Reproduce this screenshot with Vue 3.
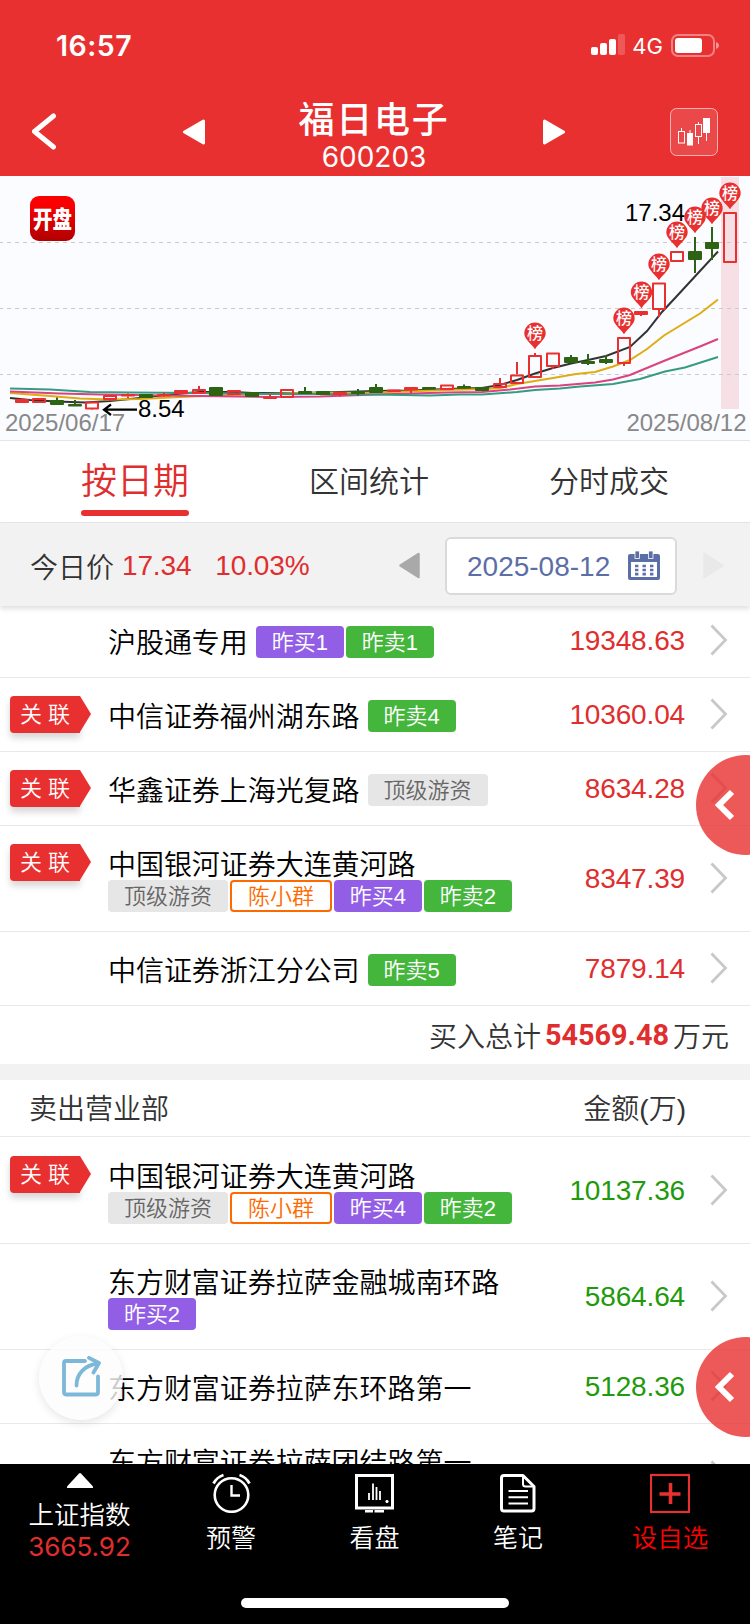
<template>
  <div class="page">
    <header class="header">
      <div class="status-bar">
        <span class="clock">16:57</span>
        <div class="status-right">
          <svg class="signal" width="34" height="22" viewBox="0 0 34 22">
            <rect x="0" y="13" width="7" height="8" rx="2" fill="#fff" />
            <rect x="9" y="9" width="7" height="12" rx="2" fill="#fff" />
            <rect x="18" y="5" width="7" height="16" rx="2" fill="#fff" />
            <rect x="27" y="0" width="7" height="21" rx="2" fill="#fff" opacity="0.2" />
          </svg>
          <span class="network">4G</span>
          <svg width="49" height="23" viewBox="0 0 49 23">
            <rect x="1" y="1" width="42" height="21" rx="6" fill="none" stroke="#fff" stroke-width="2" opacity="0.4" />
            <rect x="4" y="4" width="27" height="15" rx="3" fill="#fff" />
            <path d="M45 8 C49 9.500 49 13.500 45 15 Z" fill="#fff" opacity="0.5" />
          </svg>
        </div>
      </div>
      <div class="nav">
        <svg class="back" width="26" height="38" viewBox="0 0 26 38">
          <path d="M21.500 3 L2.500 18.500 L21.500 34" fill="none" stroke="#fff" stroke-width="5" stroke-linecap="round" stroke-linejoin="round" />
        </svg>
        <svg width="22" height="26" viewBox="0 0 22 26">
          <path d="M20.500 2 L1.500 13 L20.500 24 Z" fill="#fff" stroke="#fff" stroke-width="3" stroke-linejoin="round" />
        </svg>
        <div class="title">
          <h1>福日电子</h1>
          <p>600203</p>
        </div>
        <svg width="22" height="26" viewBox="0 0 22 26">
          <path d="M1.500 2 L20.500 13 L1.500 24 Z" fill="#fff" stroke="#fff" stroke-width="3" stroke-linejoin="round" />
        </svg>
        <span></span>
        <svg width="48" height="48" viewBox="0 0 48 48">
          <rect x="0.5" y="0.5" width="47" height="47" rx="6" fill="#fff" fill-opacity="0.12" stroke="#fff" stroke-opacity="0.6" />
          <path d="M11.500 20 V23.500 M28.500 14 V17 M28.500 28.500 V36 M20 22 V26 M36.500 24 V33" stroke="#fff" />
          <rect x="8.500" y="23.500" width="6" height="11.500" fill="none" stroke="#fff" />
          <rect x="17" y="25" width="6" height="12.500" fill="#fff" />
          <rect x="25.500" y="16.500" width="6" height="12" fill="none" stroke="#fff" />
          <rect x="33" y="10" width="7" height="15" fill="#fff" />
        </svg>
      </div>
    </header>

    <svg class="chart" width="750" height="264" viewBox="0 0 750 264">
      <defs>
        <linearGradient id="logoBg" x1="0" y1="0" x2="0" y2="1">
          <stop offset="0.2" stop-color="#fb0000" />
          <stop offset="1" stop-color="#b00000" />
        </linearGradient>
      </defs>
      <rect x="721" y="1" width="18" height="232" fill="#f6dfe5" />
      <line v-for="y in gridLines" :key="y" x1="-1" x2="750" :y1="y" :y2="y" class="grid-line" />
      <rect x="30" y="20" width="45" height="45" rx="9" fill="url(#logoBg)" />
      <text x="33" y="0" class="logo-text" transform="translate(0 51.500) scale(1 1.250)">开盘</text>

      <polyline v-for="l in lines" :key="l.color" :points="l.points" :stroke="l.color" class="ma" />
      <g v-for="(c, i) in candles" :key="i" :stroke="colors[c[5]]">
        <line :x1="c[0]" :x2="c[0]" :y1="c[3]" :y2="c[1]" stroke-width="2" />
        <line :x1="c[0]" :x2="c[0]" :y1="c[2]" :y2="c[4]" stroke-width="2" />
        <rect
          :x="c[0] - 6"
          :y="c[1] + 1"
          width="12"
          :height="Math.max(c[2] - c[1] - 2, 0.5)"
          :fill="c[5] === 'up' ? 'none' : colors[c[5]]"
          stroke-width="2"
          stroke-linejoin="round"
        />
      </g>

      <text x="5" y="255" class="axis">2025/06/17</text>
      <text x="746.500" y="255" class="axis" text-anchor="end">2025/08/12</text>
      <path d="M137 233.700 H104 M111 228.500 L104 233.700 L111 239" fill="none" stroke="#000" stroke-width="2.200" />
      <text x="138" y="241" class="price">8.54</text>
      <text x="625" y="45" class="price">17.34</text>

      <g v-for="p in pins" :key="p[0]">
        <path :d="pinPath(p[0], p[1])" fill="#e93030" />
        <text :x="p[0]" :y="p[1] + 6" class="pin-text">榜</text>
      </g>
    </svg>

    <nav class="tabs">
      <span class="tab active">按日期</span>
      <span class="tab">区间统计</span>
      <span class="tab">分时成交</span>
    </nav>

    <div class="filter">
      <span class="today">今日价</span>
      <span class="today-price">17.34</span>
      <span class="today-rate">10.03%</span>
      <svg class="prev" width="21" height="27" viewBox="0 0 21 27">
        <path d="M19.500 2 L1.500 13.500 L19.500 25 Z" fill="#a9a9a9" stroke="#a9a9a9" stroke-width="2.500" stroke-linejoin="round" />
      </svg>
      <div class="date-box">
        <span>2025-08-12</span>
        <svg class="calendar" width="32" height="29" viewBox="0 0 32 29">
          <path d="M2 3 H30 Q32 3 32 5 V27 Q32 29 30 29 H2 Q0 29 0 27 V5 Q0 3 2 3 Z M3 11 V26 H29 V11 Z" fill="#5c6ea6" fill-rule="evenodd" />
          <rect x="7" y="0" width="4.500" height="7.500" fill="#5c6ea6" stroke="#fff" stroke-width="0.800" />
          <rect x="20.500" y="0" width="4.500" height="7.500" fill="#5c6ea6" stroke="#fff" stroke-width="0.800" />
          <path d="M7 15 H25.500 M7 19 H25.500 M7 23.200 H25.500" stroke="#5c6ea6" stroke-width="2.700" stroke-dasharray="3.400 4.100" />
        </svg>
      </div>
      <svg class="next" width="21" height="27" viewBox="0 0 21 27">
        <path d="M1.500 2 L19.500 13.500 L1.500 25 Z" fill="#e9e9e9" stroke="#e9e9e9" stroke-width="2.500" stroke-linejoin="round" />
      </svg>
    </div>

    <main class="content">
      <template v-for="section in sections" :key="section.type">
        <div v-if="section.type === 'sell'" class="section-head">
          <span>卖出营业部</span>
          <span>金额(万)</span>
        </div>
        <ul class="list" :class="section.type">
          <li v-for="(row, i) in section.rows" :key="i" class="row">
            <div class="link-col">
              <div v-if="row.linked" class="linked"><span>关</span><span>联</span></div>
            </div>
            <div class="broker" :class="{ stacked: row.stacked }">
              <div class="name">{{ row.name }}</div>
              <div v-if="row.tags.length" class="tags">
                <span v-for="t in row.tags" :key="t" class="tag" :class="tagClass(t)">{{ t }}</span>
              </div>
            </div>
            <div class="amount">{{ row.amount }}</div>
            <svg class="chevron" width="18" height="32" viewBox="0 0 18 32">
              <path d="M1.500 1.500 L15.500 16 L1.500 30.500" fill="none" stroke="#c8c8c8" stroke-width="2.800" />
            </svg>
          </li>
        </ul>
        <div v-if="section.type === 'buy'" class="total">
          <span>买入总计</span><b>54569.48</b><span>万元</span>
        </div>
      </template>
    </main>

    <div v-for="n in 2" :key="n" class="drawer" :class="'drawer-' + n">
      <svg width="20" height="32" viewBox="0 0 20 32">
        <path d="M17 3 L4 16 L17 29" fill="none" stroke="#fff" stroke-width="6" />
      </svg>
    </div>

    <div class="share">
      <svg width="42" height="42" viewBox="0 0 42 42">
        <path d="M25 5 H6 Q4 5 4 7 V36 Q4 38.500 6 38.500 H36 Q38 38.500 38 36 V20.500" fill="none" stroke="#7db8d8" stroke-width="3.800" stroke-linecap="round" stroke-linejoin="round" />
        <path d="M16.500 29.500 C16.500 17.500 25 9 38 7.500" fill="none" stroke="#7db8d8" stroke-width="3.800" stroke-linecap="round" />
        <path d="M29 1.900 L39 7 L33.500 16.500" fill="none" stroke="#7db8d8" stroke-width="3.800" stroke-linecap="round" stroke-linejoin="round" />
      </svg>
    </div>

    <footer class="footer">
      <div class="foot-items">
        <div class="index">
          <svg width="26" height="15" viewBox="0 0 26 15">
            <path d="M12 0.500 Q13 -0.300 14 0.500 L26 13.500 V15 H0 V13.500 Z" fill="#fff" />
          </svg>
          <span class="index-name">上证指数</span>
          <span class="index-value">3665.92</span>
        </div>
        <div class="foot-item">
          <svg width="40" height="40" viewBox="0 0 40 40" fill="none" stroke="#fff">
            <circle cx="20.500" cy="22" r="16.800" stroke-width="2.600" />
            <path d="M20.500 12 V22.500 H29" stroke-width="2.400" />
            <path d="M2.500 10.500 Q6 4 12.500 2 M38.500 10.500 Q35 4 28.500 2" stroke-width="2.800" />
          </svg>
          <span>预警</span>
        </div>
        <div class="foot-item">
          <svg width="40" height="40" viewBox="0 0 40 40" fill="none" stroke="#fff">
            <rect x="2.500" y="2.500" width="36" height="32.500" stroke-width="3" />
            <path d="M11 38.300 H19 M20.500 38.300 H30" stroke-width="2.400" />
            <path d="M15 20 V27 M19 10.500 V27 M22.500 14 V27 M26 18 V27" stroke-width="1.800" />
            <circle cx="33" cy="28.500" r="1.200" fill="#fff" />
          </svg>
          <span>看盘</span>
        </div>
        <div class="foot-item">
          <svg width="40" height="40" viewBox="0 0 40 40" fill="none" stroke="#fff" stroke-linejoin="round">
            <path d="M6 2.500 H25 L36 13.500 V35.500 Q36 38 33.500 38 H6 Q3.500 38 3.500 35.500 V5 Q3.500 2.500 6 2.500 Z" stroke-width="3" />
            <path d="M25 3 V11 Q25 13.500 27.500 13.500 H36" stroke-width="2" />
            <path d="M10.500 18 H30 M10.500 24.300 H30 M10.500 30.500 H30" stroke-width="2" />
          </svg>
          <span>笔记</span>
        </div>
        <div class="foot-item fav">
          <svg width="40" height="40" viewBox="0 0 40 40" fill="none" stroke="#e93030">
            <rect x="1" y="2" width="38" height="37" stroke-width="2.200" />
            <path d="M20.500 10 V31 M9.500 21 H30.500" stroke-width="3.600" />
          </svg>
          <span>设自选</span>
        </div>
      </div>
      <div class="home-bar"></div>
    </footer>
  </div>
</template>

<script setup>
const colors = { up: '#e93030', full: '#e93030', down: '#2d6413' }
const gridLines = [66.5, 132.5, 198.5]

// x, body top, body bottom, high, low, type
const candles = [
  [22, 223, 227, 222, 227, 'full'],
  [39, 222, 227, 222, 227, 'up'],
  [57, 224, 229, 221.5, 229, 'down'],
  [75, 228, 230, 224, 230, 'down'],
  [92, 225.500, 233.500, 225.500, 233, 'up'],
  [110, 219, 224, 219, 225, 'up'],
  [128, 218, 220.5, 217.5, 222, 'full'],
  [146, 218, 222, 218, 222, 'down'],
  [164, 218, 220.5, 216.5, 221, 'full'],
  [181, 214, 218, 214, 218, 'full'],
  [199, 213, 218, 210, 218, 'up'],
  [216, 211, 220, 211, 220, 'down'],
  [234, 214, 219, 214, 219, 'up'],
  [252, 216, 221, 216, 221, 'down'],
  [270, 220.5, 222.5, 218.5, 222.5, 'full'],
  [287, 213, 222, 213, 222, 'up'],
  [305, 215, 218, 211, 218, 'down'],
  [323, 215, 219, 215, 219, 'down'],
  [340, 216, 219, 216, 220.5, 'full'],
  [358, 215, 218, 213, 219.5, 'down'],
  [376, 211, 217, 208, 217, 'down'],
  [394, 213.5, 216, 213.5, 216, 'full'],
  [411, 211, 214.5, 211, 217, 'full'],
  [429, 211, 213, 211, 213, 'down'],
  [447, 208.5, 214, 208.5, 214, 'up'],
  [464, 210, 212.5, 208.5, 213, 'down'],
  [482, 211, 215, 211, 215, 'down'],
  [500, 207, 212, 202, 212, 'up'],
  [517, 198.5, 208, 186, 208, 'up'],
  [535, 179, 202, 177, 202, 'up'],
  [553, 176.5, 191, 176.5, 193, 'up'],
  [571, 181, 187, 179, 187, 'down'],
  [588, 185, 188, 178, 189, 'down'],
  [606, 183, 187, 179.5, 188, 'down'],
  [624, 161, 188, 161, 190, 'up'],
  [641, 135, 139, 135, 140, 'full'],
  [659, 106.5, 134, 106.5, 141, 'up'],
  [677, 75, 86, 75, 86, 'up'],
  [695, 75, 84, 61, 97, 'down'],
  [712, 66, 73, 51, 84, 'down'],
  [730, 36, 87, 36, 87, 'up'],
]

const lines = [
  { color: '#333333', points: '10,222 30,224 57,225.500 85,226.500 110,225 140,222 165,219 200,216 234,216 252,217 300,217 340,216 376,215 411,214.500 447,213 482,212 500,209 517,204 535,197.500 553,192 571,187.500 588,184 606,180 630,171 647,155 662,136 676,121 700,95 718,75.500' },
  { color: '#dfad12', points: '10,217 50,220 80,222.500 110,223.500 140,223 180,221 230,219 300,217 376,216.500 447,214 485,213 500,212 517,208 553,202 576,198 595,196 613,190.500 630,184 647,173 664,159.500 700,137.500 718,123.500' },
  { color: '#d94380', points: '10,215.500 60,217.500 100,218.500 200,220 270,221 320,220.500 376,218.500 447,216.500 482,216 510,213.500 535,210.500 560,209.500 595,206.500 613,203.500 630,199 665,184.500 700,170.500 718,163' },
  { color: '#369b82', points: '10,212.500 50,213.500 90,216 130,216.500 200,217 270,218 320,218 376,218.500 430,219.500 460,218.500 482,218.500 517,216 535,214 560,212.500 580,210.500 613,208 640,203 665,195.500 685,191.500 718,181' },
]

const pins = [
  [535, 157.3], [624, 142.3], [641.5, 116.3], [659, 88.3], [677, 56.3], [695, 41.3], [712, 32.3], [730, 17.3],
]

function pinPath(x, y) {
  return `M${x - 10.7} ${y} A10.700 10.700 0 1 1 ${x + 10.7} ${y} C${x + 10.7} ${y + 6} ${x + 4} ${y + 10} ${x} ${y + 16} C${x - 4} ${y + 10} ${x - 10.7} ${y + 6} ${x - 10.7} ${y} Z`
}

const sections = [
  {
    type: 'buy',
    rows: [
      { name: '沪股通专用', tags: ['昨买1', '昨卖1'], amount: '19348.63' },
      { name: '中信证券福州湖东路', tags: ['昨卖4'], amount: '10360.04', linked: true },
      { name: '华鑫证券上海光复路', tags: ['顶级游资'], amount: '8634.28', linked: true },
      { name: '中国银河证券大连黄河路', tags: ['顶级游资', '陈小群', '昨买4', '昨卖2'], amount: '8347.39', linked: true, stacked: true },
      { name: '中信证券浙江分公司', tags: ['昨卖5'], amount: '7879.14' },
    ],
  },
  {
    type: 'sell',
    rows: [
      { name: '中国银河证券大连黄河路', tags: ['顶级游资', '陈小群', '昨买4', '昨卖2'], amount: '10137.36', linked: true, stacked: true },
      { name: '东方财富证券拉萨金融城南环路', tags: ['昨买2'], amount: '5864.64', stacked: true },
      { name: '东方财富证券拉萨东环路第一', tags: [], amount: '5128.36' },
      { name: '东方财富证券拉萨团结路第一', tags: [], amount: '', stacked: true },
    ],
  },
]

function tagClass(text) {
  if (text.startsWith('昨买')) return 'purple'
  if (text.startsWith('昨卖')) return 'green'
  return text === '陈小群' ? 'orange' : 'gray'
}
</script>

<style>
body { margin: 0; background: #fff; }
</style>

<style scoped>
.page {
  position: relative;
  width: 750px;
  height: 1624px;
  overflow: hidden;
  display: flex;
  flex-direction: column;
  background: #fff;
  font-family: "Liberation Sans", "Noto Sans CJK SC", sans-serif;
  font-size: 28px;
  font-weight: 350;
  color: #333;
}
svg { display: block; flex-shrink: 0; }
.header { height: 176px; flex-shrink: 0; background: #e93030; color: #fff; }
.status-bar {
  height: 90px;
  box-sizing: border-box;
  padding: 0 30px 0 56px;
  display: flex;
  align-items: center;
  justify-content: space-between;
  font-family: Inter, sans-serif;
}
.clock { font-size: 28.500px; font-weight: 600; letter-spacing: 0.500px; }
.status-right { display: flex; align-items: center; }
.network { font-size: 22px; font-weight: 400; margin: 2px 8px 0 7px; }
.nav {
  height: 84px;
  padding: 0 32px;
  display: grid;
  grid-template-columns: 151px 22px 1fr 22px 105px 48px;
  align-items: center;
}
.title { text-align: center; padding-top: 9px; }
.title h1 { margin: 0; font-size: 36px; line-height: 42px; font-weight: 500; letter-spacing: 1.700px; }
.title p { margin: -1px 0 0; font-family: Inter, sans-serif; font-size: 28px; line-height: 32px; font-weight: 400; }

.chart { background: #fbfcff; }
.grid-line { stroke: #c9cacf; stroke-width: 1; stroke-dasharray: 4 4; }
.logo-text { font-size: 19.500px; font-weight: 900; fill: #fff; }
.ma { fill: none; stroke-width: 2; }
.axis { font-size: 24px; fill: #888; }
.price { font-size: 24px; fill: #000; }
.pin-text { font-size: 16px; font-weight: 500; fill: #fff; text-anchor: middle; }

.tabs {
  height: 83px;
  box-sizing: border-box;
  padding: 0 81px;
  border-top: 1px solid #e6e6e6;
  border-bottom: 1px solid #e6e6e6;
  display: flex;
  justify-content: space-between;
  flex-shrink: 0;
}
.tab { font-size: 30px; line-height: 82px; }
.tab.active {
  position: relative;
  font-size: 36px;
  color: #e02e2e;
}
.tab.active::after {
  content: "";
  position: absolute;
  left: 0;
  right: 0;
  top: 69px;
  height: 6px;
  border-radius: 3px;
  background: #e93030;
}

.filter {
  position: relative;
  z-index: 1;
  height: 83px;
  box-sizing: border-box;
  padding-top: 2px;
  margin-bottom: -2px;
  flex-shrink: 0;
  display: flex;
  align-items: center;
  background: #f2f2f2;
  box-shadow: 0 3px 5px rgba(0, 0, 0, 0.12);
}
.today { margin-left: 30px; }
.today-price { margin-left: 8px; padding-top: 1px; color: #e02e2e; letter-spacing: -0.150px; }
.today-rate { margin-left: 24px; padding-top: 1px; color: #e02e2e; letter-spacing: -0.150px; }
.prev { margin-left: auto; }
.date-box {
  width: 232px;
  height: 58px;
  box-sizing: border-box;
  margin: 0 26px 0 25px;
  padding: 3px 15px 0 20px;
  border: 2px solid #dadada;
  border-radius: 6px;
  background: #fff;
  color: #5c6ea6;
  display: flex;
  align-items: center;
  justify-content: space-between;
}
.calendar { margin-top: -4px; }
.next { margin-right: 26px; }

.content { flex: 1; overflow: hidden; }
.list { margin: 0; padding: 0; list-style: none; }
.list.sell { padding-top: 1px; }
.row {
  display: flex;
  align-items: center;
  border-bottom: 1px solid #e8e8e8;
  padding-right: 22px;
}
.link-col { width: 108px; align-self: flex-start; flex-shrink: 0; }
.linked {
  position: relative;
  width: 70px;
  height: 37px;
  box-sizing: border-box;
  margin: 18px 0 0 10px;
  padding: 0 0 5px 10px;
  display: flex;
  align-items: center;
  gap: 6px;
  background: #e93030;
  border-radius: 4px 0 0 4px;
  box-shadow: 0 5px 7px rgba(0, 0, 0, 0.16);
  color: #fff;
  font-size: 22px;
}
.linked::after {
  content: "";
  position: absolute;
  left: 70px;
  top: 0;
  border-left: 11px solid #e93030;
  border-top: 18.500px solid transparent;
  border-bottom: 18.500px solid transparent;
}
.broker { flex: 1; display: flex; padding: 20px 0 19px; }
.broker.stacked { display: block; min-height: 66px; }
.name { height: 34px; line-height: 40px; color: #000; white-space: nowrap; letter-spacing: -0.050px; }
.tags { display: flex; gap: 2px; margin: 2px 0 0 8px; }
.stacked .tags { margin: 0; }
.tag {
  height: 32px;
  line-height: 33px;
  box-sizing: border-box;
  padding: 0 16px;
  border-radius: 4px;
  font-size: 22px;
  letter-spacing: -0.070px;
  color: #fff;
  white-space: nowrap;
}
.purple { background: #935ee6; }
.green { background: #43b63b; }
.gray { background: #e6e6e6; color: #666; letter-spacing: 0; }
.orange { background: #fff; color: #ff6a00; border: 2px solid #ff6a00; line-height: 29px; }
.amount { margin-right: 25px; color: #e02e2e; letter-spacing: -0.150px; }
.chevron { margin-bottom: 1px; }
.sell .amount { color: #1f9a0c; }
.total {
  height: 58px;
  padding: 0 21px 0 0;
  border-bottom: 16px solid #f2f2f2;
  display: flex;
  align-items: center;
  justify-content: flex-end;
}
.total b { margin: 0 4px 0 4px; font-family: Roboto, sans-serif; font-size: 28.800px; font-weight: 700; color: #e02e2e; }
.section-head {
  height: 54px;
  padding: 0 64px 2px 29px;
  border-bottom: 1px solid #e8e8e8;
  display: flex;
  align-items: center;
  justify-content: space-between;
}

.drawer {
  position: absolute;
  left: 696px;
  width: 100px;
  height: 100px;
  box-sizing: border-box;
  padding-left: 19px;
  border-radius: 50%;
  background: rgba(233, 48, 48, 0.8);
  display: flex;
  align-items: center;
  z-index: 2;
}
.drawer-1 { top: 755px; }
.drawer-2 { top: 1337px; }
.share {
  position: absolute;
  left: 39px;
  top: 1336px;
  width: 84px;
  height: 84px;
  box-sizing: border-box;
  padding-bottom: 2px;
  border-radius: 50%;
  background: rgba(252, 252, 252, 0.8);
  box-shadow: 0 3px 10px rgba(0, 0, 0, 0.1);
  display: flex;
  align-items: center;
  justify-content: center;
}

.footer { position: relative; height: 160px; flex-shrink: 0; background: #000; color: #fff; }
.foot-items {
  display: grid;
  grid-template-columns: 159px 144px 143px 144px 160px;
  justify-items: center;
}
.index { display: flex; flex-direction: column; align-items: center; padding-top: 9px; }
.index-name { font-size: 25.500px; line-height: 36px; margin-top: 9px; }
.index-value { font-family: Inter, sans-serif; font-size: 26px; line-height: 28px; font-weight: 400; color: #e02e2e; }
.foot-item { display: flex; flex-direction: column; align-items: center; padding-top: 9px; font-size: 25px; }
.foot-item span { line-height: 36px; margin-top: 7px; }
.fav { color: #f00; font-size: 25.500px; }
.home-bar {
  width: 268px;
  height: 10px;
  border-radius: 5px;
  background: #fff;
  position: absolute;
  left: 241px;
  top: 134px;
}
</style>
